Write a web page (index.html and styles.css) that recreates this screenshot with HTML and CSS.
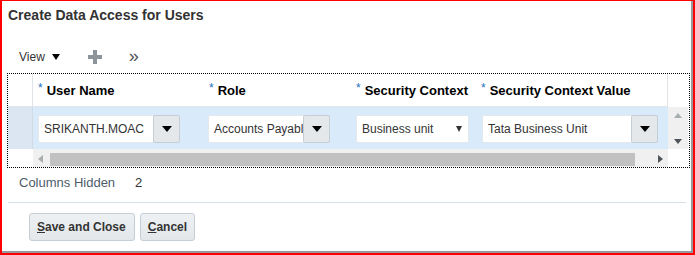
FILE: index.html
```html
<!DOCTYPE html>
<html lang="en">
<head>
    <meta charset="UTF-8">
    <title>Create Data Access for Users</title>
    <link rel="stylesheet" href="styles.css">
</head>
<body>
    <div class="frame">
        <div class="dialog">
            <h1 class="title">Create Data Access for Users</h1>

            <div class="toolbar">
                <span class="tb-view">View <span class="tri"></span></span>
                <span class="tb-add"></span>
                <span class="tb-more">&raquo;</span>
            </div>

            <div class="table">
                <div class="grid">
                    <!-- header -->
                    <div class="hd hd-first"></div>
                    <div class="hd"><span class="req">*</span>User Name</div>
                    <div class="hd"><span class="req">*</span>Role</div>
                    <div class="hd"><span class="req">*</span>Security Context</div>
                    <div class="hd hd-last"><span class="req">*</span>Security Context Value</div>
                    <div class="hd hd-corner"></div>

                    <!-- data row -->
                    <div class="cell cell-first"></div>
                    <div class="cell c1">
                        <div class="lov w1"><span class="lov-text">SRIKANTH.MOAC</span><span class="lov-btn"><span class="tri"></span></span></div>
                    </div>
                    <div class="cell c2">
                        <div class="lov w2"><span class="lov-text">Accounts Payabl</span><span class="lov-btn"><span class="tri"></span></span></div>
                    </div>
                    <div class="cell c3">
                        <div class="choice w3"><span class="lov-text">Business unit</span><span class="tri tri-sm"></span></div>
                    </div>
                    <div class="cell c4">
                        <div class="lov w4"><span class="lov-text">Tata Business Unit</span><span class="lov-btn"><span class="tri"></span></span></div>
                    </div>
                    <div class="vscroll">
                        <span class="arr-up"></span>
                        <span class="arr-down"></span>
                    </div>

                    <!-- horizontal scroll -->
                    <div class="sc-first"></div>
                    <div class="hscroll">
                        <span class="arr-left"></span>
                        <span class="thumb"></span>
                        <span class="arr-right"></span>
                    </div>
                    <div class="sc-corner"></div>
                </div>
            </div>

            <div class="hidden-cols">
                <span class="hc-label">Columns Hidden</span>
                <span class="hc-value">2</span>
            </div>

            <div class="sep"></div>

            <div class="buttons">
                <button class="btn btn-save"><u>S</u>ave and Close</button>
                <button class="btn"><u>C</u>ancel</button>
            </div>
        </div>
    </div>
</body>
</html>
```

FILE: styles.css
```css
* {
    margin: 0;
    padding: 0;
    box-sizing: border-box;
}

body {
    font-family: "Liberation Sans", Arial, sans-serif;
    background: #ffffff;
    color: #333333;
}

.frame {
    width: 695px;
    height: 255px;
    border: 2px solid #ff0000;
    border-top-width: 1px;
}

.dialog {
    height: 100%;
    background: #ffffff;
    border-right: 2px solid #969b9f;
    border-bottom: 2px solid #969b9f;
    padding-left: 5px;
}

.title {
    font-size: 14px;
    font-weight: bold;
    line-height: 20px;
    padding: 4px 0 0 1px;
    color: #333333;
}

/* toolbar */
.toolbar {
    display: flex;
    align-items: center;
    height: 24px;
    margin-top: 20px;
    padding-left: 12px;
    font-size: 12px;
    color: #333333;
}

.tb-view {
    display: flex;
    align-items: center;
    gap: 7px;
}

.tri {
    display: inline-block;
    width: 0;
    height: 0;
    border-left: 4px solid transparent;
    border-right: 4px solid transparent;
    border-top: 6px solid #000000;
}

.tb-add {
    position: relative;
    width: 14px;
    height: 14px;
    margin-left: 28px;
}

.tb-add::before,
.tb-add::after {
    content: "";
    position: absolute;
    background: #8c959b;
}

.tb-add::before {
    left: 5px;
    top: 0;
    width: 4px;
    height: 14px;
}

.tb-add::after {
    left: 0;
    top: 5px;
    width: 14px;
    height: 4px;
}

.tb-more {
    margin-left: 27px;
    font-size: 18px;
    line-height: 18px;
    color: #4d5257;
    margin-top: -3px;
}

/* table */
.table {
    margin-top: 4px;
    width: 683px;
    border: 1px dotted #000000;
}

.grid {
    display: grid;
    grid-template-columns: 25px 171px 147px 125px 192px 20px;
    grid-template-rows: 33px 42px 18px;
}

.hd {
    display: flex;
    align-items: center;
    padding-left: 5px;
    font-size: 13px;
    font-weight: bold;
    color: #000000;
    border-bottom: 1px solid #e1e6ea;
    white-space: nowrap;
}

.hd-first {
    border-right: 1px solid #dfe4e8;
}

.hd-last {
    border-right: 1px solid #dfe4e8;
}

.hd-corner {
    border-bottom: none;
}

.req {
    color: #1e6fc0;
    font-weight: normal;
    font-size: 12px;
    align-self: flex-start;
    margin-top: 7px;
    margin-right: 4px;
}

.cell {
    background: #d9eafb;
    padding-top: 8px;
}

.cell-first {
    background: #dce6f2;
    border-right: 1px solid #d2dbe4;
}

.c1 { padding-left: 5px; }
.c2 { padding-left: 4px; }
.c3 { padding-left: 5px; }
.c4 { padding-left: 6px; }

.w1 { width: 142px; }
.w2 { width: 122px; }
.w3 { width: 113px; }
.w4 { width: 176px; }

.lov,
.choice {
    display: flex;
    align-items: center;
    height: 28px;
    background: #ffffff;
    border: 1px solid #e3e8ec;
    border-radius: 2px;
    font-size: 12px;
    color: #333333;
}

.lov-text {
    flex: 1;
    overflow: hidden;
    white-space: nowrap;
    padding-left: 5px;
}

.lov-btn {
    display: flex;
    align-items: center;
    justify-content: center;
    width: 27px;
    height: 28px;
    margin: -1px -1px -1px 0;
    background: #e4e8eb;
    border: 1px solid #c6ced5;
    border-radius: 2px;
}

.lov-btn .tri {
    border-left-width: 5px;
    border-right-width: 5px;
    border-top-width: 6px;
}

.choice .lov-text {
    padding-left: 5px;
}

.tri-sm {
    border-left-width: 3px;
    border-right-width: 3px;
    border-top-width: 6px;
    border-top-color: #333333;
    margin-right: 6px;
}

.vscroll {
    display: flex;
    flex-direction: column;
    align-items: center;
    justify-content: space-between;
    padding: 6px 0 5px;
    background: #f0f0f0;
}

.arr-up {
    width: 0;
    height: 0;
    border-left: 4px solid transparent;
    border-right: 4px solid transparent;
    border-bottom: 5px solid #a9aeb1;
}

.arr-down {
    width: 0;
    height: 0;
    border-left: 4px solid transparent;
    border-right: 4px solid transparent;
    border-top: 5px solid #4f5458;
}

.sc-first,
.sc-corner {
    background: #ffffff;
}

.hscroll {
    grid-column: 2 / 6;
    display: flex;
    align-items: center;
    background: #f0f0f0;
    padding-top: 2px;
}

.arr-left {
    width: 0;
    height: 0;
    margin-left: 5px;
    border-top: 4px solid transparent;
    border-bottom: 4px solid transparent;
    border-right: 5px solid #a9aeb1;
}

.thumb {
    width: 585px;
    height: 13px;
    margin-left: 7px;
    background: #c1c1c1;
}

.arr-right {
    width: 0;
    height: 0;
    margin-left: 23px;
    border-top: 4px solid transparent;
    border-bottom: 4px solid transparent;
    border-left: 5px solid #4f5458;
}

/* footer */
.hidden-cols {
    display: flex;
    align-items: center;
    height: 18px;
    margin-top: 5px;
    padding-left: 12px;
    font-size: 13px;
}

.hc-label {
    color: #4e5c6a;
}

.hc-value {
    margin-left: 20px;
    color: #333333;
}

.sep {
    margin-top: 11px;
    width: 678px;
    height: 1px;
    margin-left: 1px;
    background: #d6e0e8;
}

.buttons {
    display: flex;
    gap: 5px;
    margin-top: 10px;
    padding-left: 22px;
}

.btn {
    height: 28px;
    padding: 0 7px;
    font-family: "Liberation Sans", Arial, sans-serif;
    font-size: 12px;
    font-weight: bold;
    color: #333333;
    background: linear-gradient(#eef1f3, #e3e7ea);
    border: 1px solid #c4ced7;
    border-radius: 3px;
}

.btn-save {
    padding: 0 8px 0 7px;
}
```
